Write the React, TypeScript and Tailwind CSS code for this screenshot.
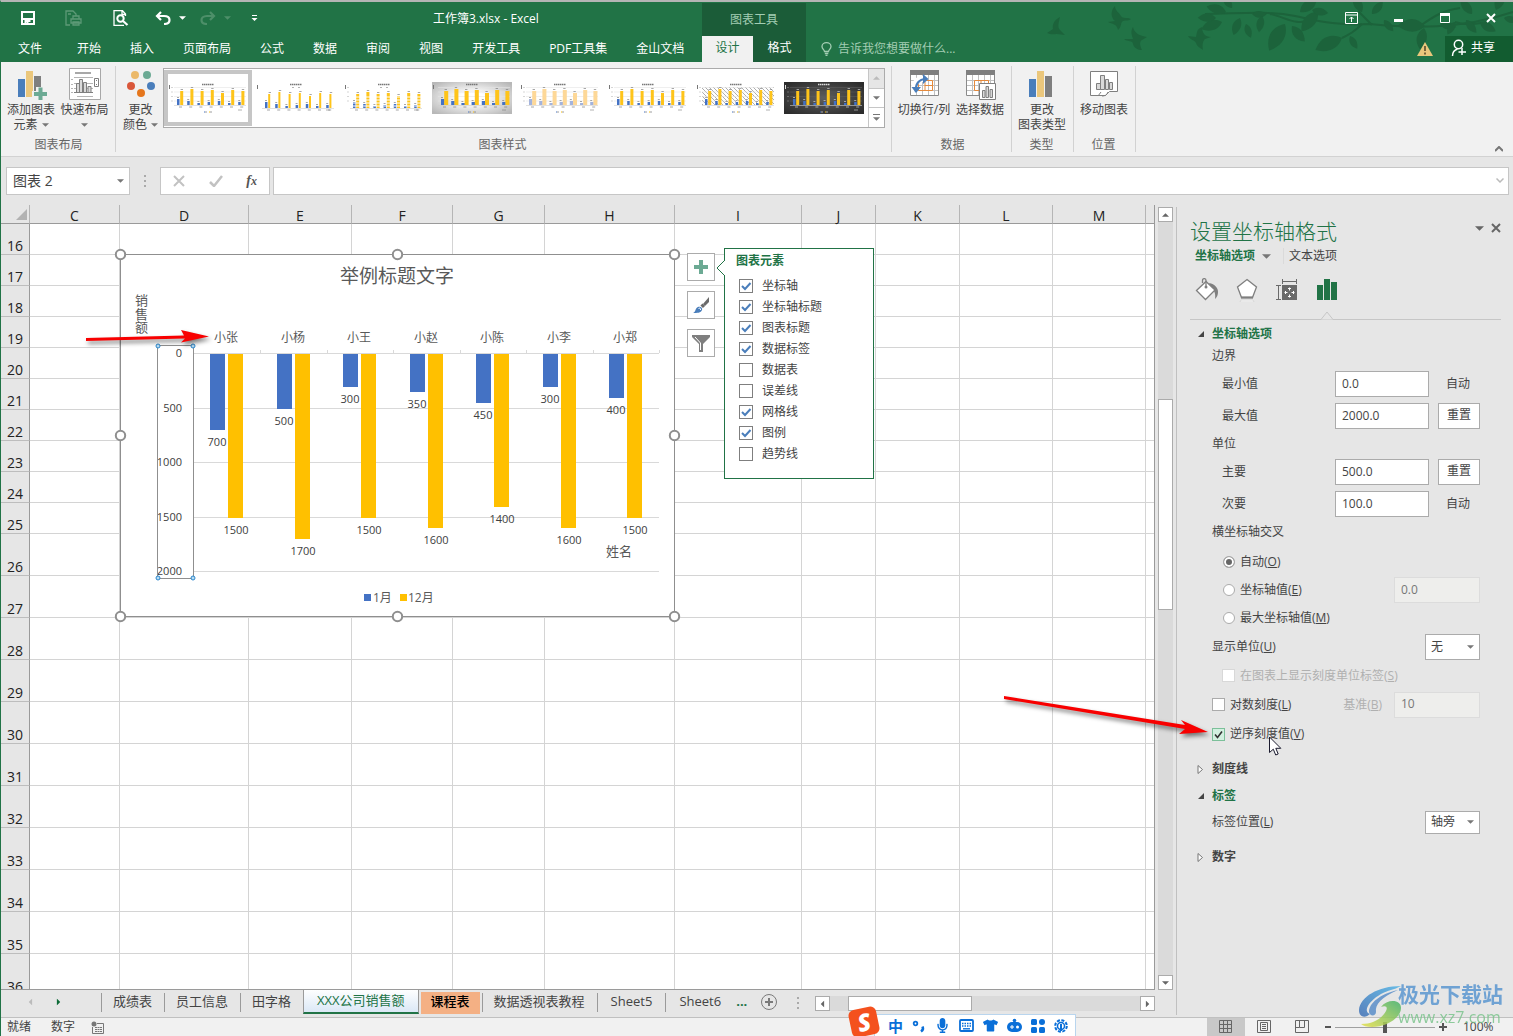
import { useState } from 'react';
import type { ReactNode } from 'react';
import clsx from 'clsx';
import { FaMicrophone, FaTshirt } from 'react-icons/fa';

const menuTabs = ['开始', '插入', '页面布局', '公式', '数据', '审阅', '视图', '开发工具', 'PDF工具集', '金山文档'];

const columns = [
  { name: 'C', width: 90 },
  { name: 'D', width: 129 },
  { name: 'E', width: 103 },
  { name: 'F', width: 101 },
  { name: 'G', width: 92 },
  { name: 'H', width: 130 },
  { name: 'I', width: 127 },
  { name: 'J', width: 74 },
  { name: 'K', width: 84 },
  { name: 'L', width: 93 },
  { name: 'M', width: 93 }
];

const rows = Array.from({ length: 21 }, (_, i) => i + 16);

const sales = [
  { name: '小张', jan: 700, dec: 1500 },
  { name: '小杨', jan: 500, dec: 1700 },
  { name: '小王', jan: 300, dec: 1500 },
  { name: '小赵', jan: 350, dec: 1600 },
  { name: '小陈', jan: 450, dec: 1400 },
  { name: '小李', jan: 300, dec: 1600 },
  { name: '小郑', jan: 400, dec: 1500 }
];

const chartElements = [
  { label: '坐标轴', on: true },
  { label: '坐标轴标题', on: true },
  { label: '图表标题', on: true },
  { label: '数据标签', on: true },
  { label: '数据表', on: false },
  { label: '误差线', on: false },
  { label: '网格线', on: true },
  { label: '图例', on: true },
  { label: '趋势线', on: false }
];

type ThumbStyle = 'plain' | 'thin' | 'striped' | 'silver' | 'pale' | 'narrow' | 'hatch' | 'dark';
const thumbStyles: ThumbStyle[] = ['plain', 'thin', 'striped', 'silver', 'pale', 'narrow', 'hatch', 'dark'];

function Caret({ className }: { className?: string }) {
  return (
    <svg viewBox="0 0 8 4" className={clsx('w-[7px] h-1 shrink-0', className)} aria-hidden="true">
      <path d="M0 0h8L4 4z" fill="currentColor" />
    </svg>
  );
}

/* ---------- Title bar ---------- */

const leaves = [
  [1226, 12, 205, 1.1], [1222, 22, 170, 1.2], [1240, 18, 120, 1], [1232, 8, 240, 0.8], [1246, 24, 80, 0.8], [1216, 18, 190, 1],
  [1252, 14, 10, 0.8], [1262, 16, 110, 0.9], [1285, 24, 130, 1.7], [1292, 26, 60, 1.1], [1300, 12, 330, 1.2], [1318, 12, 140, 1.4],
  [1312, 10, 20, 0.9], [1342, 38, 165, 1.6], [1350, 36, 70, 0.8], [1362, 12, 250, 1], [1372, 14, 320, 0.9], [1384, 20, 60, 0.8],
  [1425, 26, 190, 1.5], [1424, 28, 110, 1.2], [1440, 24, 20, 0.9], [1472, 14, 240, 1], [1480, 22, 40, 1],
  [1496, 10, 300, 1.1], [1504, 18, 20, 0.8], [1455, 22, 130, 0.8], [1466, 20, 60, 0.9]
];

function Foliage() {
  return (
    <svg viewBox="1040 2 473 60" className="absolute right-0 top-0 w-[473px] h-[60px]" fill="#1c633b" aria-hidden="true">
      <path d="M1060 17c-6 3-8 8-7 12l-6 4c4 2 8 1 10 1l8 1-5-5c-3-3-1-8 0-13z" />
      <path d="M1115 6c-5 5-4 12 0 15l-7 1c4 2 9 2 10 8 4-3 2-7 5-9 3-1 6 0 8-2-4-2-8 0-10-3-2-4-6-5-6-10z" />
      <path d="M1133 27c-3 5-1 8 0 12l-9 0c3 3 9 1 9 5 1 4 5 6 9 6-2-4-3-8 0-10l5-3c-7-1-13-4-14-10z" />
      <path d="M1202 27c-6 2-5 7-6 10l-8-1c2 4 7 4 8 7 1 4 5 5 7 7-1-6 0-9 2-11l6-2c-6 0-9-4-9-10z" />
      <g fill="none" stroke="#1c633b" strokeWidth="2">
        <path d="M1205 14c30 0 60-4 90 2 20 4 40 10 75 8 40 4 90 6 143-12" />
        <path d="M1270 14c16 3 24 12 42 6M1362 24c-8 8-12 10-20 14M1372 25l-14-14M1420 26c14-10 24-16 40-18M1455 22c12 4 20 2 32 0" />
      </g>
      {leaves.map(([x, y, angle, size]) => (
        <path
          key={`${x}-${y}`}
          d="M0 0c4-6 11-7 18-3C13 4 6 5 0 0z"
          transform={`translate(${x} ${y}) rotate(${angle}) scale(${size})`}
        />
      ))}
    </svg>
  );
}

function TitleBar() {
  return (
    <header className="relative flex h-[60px] shrink-0 bg-[#217346] text-white">
      <Foliage />
      <div className="relative flex w-[701px] shrink-0 flex-col">
        <div className="flex h-[34px] items-center">
          <div className="flex w-[432px] items-center pb-0.5">
            <button aria-label="保存" className="ml-5">
              <svg viewBox="0 0 14 14" className="size-3.5" fill="none" stroke="#fff" strokeWidth="2">
                <path d="M1 1h12v12H1z" />
                <path d="M1 8h12M4.500 13v-3h5" />
                <path d="M6.500 11v2" />
              </svg>
            </button>
            <button aria-label="快速打印" className="ml-[30px]">
              <svg viewBox="0 0 18 16" className="w-[18px] h-4" fill="none" stroke="#5d9a77" strokeWidth="1.300">
                <path d="M5 15H1V1h7l3 3v2M3 4h3" />
                <path d="M6 13V9h10v4zM8 9V6h6v3M8 12h6v3H8z" />
              </svg>
            </button>
            <button aria-label="打印预览" className="ml-[30px]">
              <svg viewBox="0 0 16 16" className="size-4" fill="none" stroke="#fff" strokeWidth="1.300">
                <path d="M11 15.300H1V.700h8.500L12.500 4v2M9 1v3.500h3.500" />
                <circle cx="7.500" cy="8.500" r="3.200" strokeWidth="2" />
                <path d="M10 11l4.500 4" strokeWidth="2.200" />
              </svg>
            </button>
            <button aria-label="撤消" className="ml-[26px] flex items-center gap-2">
              <svg viewBox="0 0 16 14" className="w-4 h-3.5" fill="none" stroke="#fff" strokeWidth="2.200">
                <path d="M6 1L2 5l4 4M2 5h7c4 0 5.500 2 5.500 4S13 13 9 13" />
              </svg>
              <Caret className="w-[5px]" />
            </button>
            <button aria-label="恢复" className="ml-3.5 flex items-center gap-2 text-[#4d8f69]">
              <svg viewBox="0 0 16 14" className="w-4 h-3.5" fill="none" stroke="currentColor" strokeWidth="2.200">
                <path d="M10 1l4 4-4 4M14 5H7C3 5 1.500 7 1.500 9S3 13 7 13" />
              </svg>
              <Caret className="w-[5px]" />
            </button>
            <button aria-label="自定义快速访问工具栏" className="ml-5">
              <svg viewBox="0 0 7 7" className="size-[7px]" fill="#fff">
                <path d="M1 0h5v1H1zM.500 3h6l-3 3z" />
              </svg>
            </button>
          </div>
          <h1 className="text-xs">工作簿3.xlsx - Excel</h1>
        </div>
        <nav className="flex h-[26px] items-center gap-[29px] pl-[17px] text-xs">
          <button className="mr-1.5">文件</button>
          {menuTabs.map((tab) => (
            <button key={tab} className="whitespace-nowrap">{tab}</button>
          ))}
        </nav>
      </div>
      <div className="relative mt-px flex w-[104px] shrink-0 flex-col bg-[#1b5c38] text-xs">
        <div className="flex h-[33px] items-center justify-center text-[#a3cdb3]">图表工具</div>
        <div className="flex flex-1">
          <button className="w-[51px] bg-[#f1f1f1] pb-0.5 text-[#217346]">设计</button>
          <button className="flex-1 pb-0.5">格式</button>
        </div>
      </div>
      <div className="relative flex flex-1 flex-col">
        <div className="flex h-[34px] items-center justify-end gap-9 pr-[17px] pb-0.5">
          <button aria-label="功能区显示选项">
            <svg viewBox="0 0 13 12" className="w-[13px] h-3" fill="none" stroke="#fff">
              <path d="M.500.500h12v11H.500zM.500 3h12M6.500 10V5M4.500 7l2-2 2 2" />
            </svg>
          </button>
          <button aria-label="最小化">
            <svg viewBox="0 0 10 10" className="size-2.5" fill="#fff"><path d="M0 6h9v3H0z" /></svg>
          </button>
          <button aria-label="最大化">
            <svg viewBox="0 0 10 10" className="size-2.5" fill="none" stroke="#fff">
              <path d="M.500.500h9v9h-9z" /><path d="M0 1.500h10" strokeWidth="3" />
            </svg>
          </button>
          <button aria-label="关闭">
            <svg viewBox="0 0 10 10" className="size-2.5" fill="none" stroke="#fff" strokeWidth="2"><path d="M1 1l8 8M9 1L1 9" /></svg>
          </button>
        </div>
        <div className="flex h-[26px] items-center">
          <button className="ml-[15px] flex items-center gap-1.5 text-xs text-[#a3cdb3]">
            <svg viewBox="0 0 11 14" className="w-[11px] h-3.5" fill="none" stroke="currentColor" strokeWidth="1.300">
              <path d="M3.500 9.500C3.500 8 1 7 1 4.500a4.500 3.800 0 0 1 9 0C10 7 7.500 8 7.500 9.500zM3.800 11.500h3.500M4.500 13.300h2" />
            </svg>
            告诉我您想要做什么...
          </button>
          <svg viewBox="0 0 16 14" className="ml-auto mr-3 w-4 h-3.5" aria-hidden="true">
            <path d="M8 0l8 14H0z" fill="#ebc77c" /><path d="M8 4v5M8 10.500v2" stroke="#5a4a2a" strokeWidth="1.600" />
          </svg>
          <button className="flex h-full w-[68px] items-center gap-1 bg-[#125c30] pb-0.5 pl-1.5 text-xs">
            <svg viewBox="0 0 16 18" className="w-4 h-[18px]" fill="none" stroke="#fff" strokeWidth="1.500">
              <circle cx="7.500" cy="5.500" r="4.200" /><path d="M1.500 17c0-4 2-6 5-7M11 9v7M7.500 13H15" />
            </svg>
            共享
          </button>
        </div>
      </div>
    </header>
  );
}

/* ---------- Ribbon ---------- */

function Thumb({ kind }: { kind: ThumbStyle }) {
  const decHeights = [14, 16, 14, 15, 12, 15, 14];
  const janHeights = [6, 4, 2, 3, 4, 2, 3];
  const wide = kind === 'silver' || kind === 'pale';
  const ink = kind === 'dark' ? '#ddd' : '#777';
  const low = kind === 'thin' || kind === 'striped';
  const base = low ? 26 : 23;
  const decW = wide ? 4 : kind === 'thin' ? 2 : 3;
  return (
    <svg viewBox="0 0 80 32" className="w-20 h-8" aria-hidden="true">
      <defs>
        <radialGradient id="silverBg" r=".65"><stop offset=".25" stopColor="#fff" /><stop offset="1" stopColor="#b8b8b8" /></radialGradient>
        <radialGradient id="darkBg" r=".65"><stop offset="0" stopColor="#5e5e5e" /><stop offset="1" stopColor="#2c2c2c" /></radialGradient>
        <pattern id="hatchBg" width="4" height="4" patternUnits="userSpaceOnUse"><path d="M0 0l4 4" stroke="#999" strokeWidth=".8" /></pattern>
      </defs>
      {kind === 'silver' && <rect width="80" height="32" fill="url(#silverBg)" />}
      {kind === 'dark' && <rect width="80" height="32" fill="url(#darkBg)" />}
      {kind === 'hatch' && <rect x="6" y="5" width="72" height="18" fill="url(#hatchBg)" />}
      <path d="M34 2.500h12" stroke={ink} strokeWidth="1.600" strokeDasharray="1.500 .5" />
      <path d="M1.500 3v4" stroke={ink} />
      {!low && <path d="M6 5.500h72M6 10h72M6 14.500h72M6 19h72" stroke={kind === 'dark' ? '#5c5c5c' : '#e4e4e4'} strokeWidth=".6" />}
      <path d={`M6 ${base}.5h72`} stroke="#ccc" strokeWidth=".6" />
      {kind !== 'thin' && kind !== 'silver' && <path d="M4 5v18" stroke={ink} strokeDasharray="1 3.500" opacity=".6" />}
      {decHeights.map((h, i) => {
        const x = 9 + i * 10.2;
        const blue = kind === 'pale' ? '#a3b3dc' : '#4472c4';
        const gold = kind === 'pale' ? '#fdd898' : '#fec41a';
        return (
          <g key={i}>
            <rect x={x} y={base - janHeights[i]} width={wide ? 3.5 : 2.5} height={janHeights[i]} fill={blue} />
            <rect x={x + 3.2} y={base - h} width={decW} height={h} fill={gold} />
            {kind === 'striped' && <path d={`M${x} ${base - 2}h7M${x} ${base - 5}h7M${x} ${base - 8}h7M${x} ${base - 11}h7`} stroke="#fff" />}
            <path d={`M${x + 3.6} ${base - h - 1.5}h2.4M${x} ${base - janHeights[i] - 1.5}h2M${x + 2} ${base + 2}h3`} stroke={ink} strokeWidth=".8" opacity=".8" />
          </g>
        );
      })}
      {low ? (
        <path d="M36 5.500h2M42 5.500h2" stroke={ink} strokeWidth=".8" opacity=".7" />
      ) : (
        <path d="M37 30h2M42 30h2" stroke={ink} opacity=".7" />
      )}
      {!low && <path d="M36 30h1" stroke="#4472c4" />}
      {!low && <path d="M41 30h1" stroke="#ffc000" />}
      <path d="M70 28h4" stroke={ink} strokeWidth=".8" opacity=".7" />
    </svg>
  );
}

function RibbonButton({ icon, lines, caret, className }: { icon: ReactNode; lines: string[]; caret?: boolean; className: string }) {
  return (
    <button className={clsx('flex flex-col items-center pt-0.5 text-xs leading-[15px] whitespace-nowrap text-[#444]', className)}>
      <svg viewBox="0 0 32 32" className="mb-0.5 size-8" fill="none" aria-hidden="true">{icon}</svg>
      <span>{lines[0]}</span>
      <span className="flex h-[15px] items-center gap-1">
        {lines[1]}
        {caret && <Caret className="w-[5px] text-[#777]" />}
      </span>
    </button>
  );
}

function RibbonGroup({ label, className, children }: { label: string; className: string; children: ReactNode }) {
  return (
    <section className={clsx('mt-1 flex h-[86px] shrink-0 flex-col border-r border-[#d2d2d2]', className)}>
      <div className="flex h-[73px]">{children}</div>
      <div className="pr-0.5 text-center text-xs leading-[15px] text-[#666]">{label}</div>
    </section>
  );
}

const barsIcon = (
  <>
    <path d="M3 11h7v18H3z" fill="#4a7ebb" />
    <path d="M11 3h7v26h-7z" fill="#ebc77c" />
    <path d="M19 8h7v21h-7z" fill="#7f7f7f" />
  </>
);

const tableIcon = (
  <>
    <path d="M2 3h29v25H2z" fill="#fff" />
    <path d="M2 12.500h29M2 17.500h29M2 22.500h29M8.500 7v21M14.500 7v21M20.500 7v21M26.500 7v21" stroke="#c0c0c0" />
    <path d="M2.500 2.500h28v25h-28z" stroke="#8a8a8a" />
    <path d="M2 2h29v5H2z" fill="#7f7f7f" />
    <path d="M10.500 12.500h14v10h-14zM17 12.500v10M17 17.500h8" stroke="#e58a3c" />
  </>
);

function Ribbon() {
  const [style, setStyle] = useState(0);
  return (
    <div className="relative flex h-[95px] shrink-0 border-b border-[#d2d2d2] bg-[#f1f1f1]">
      <RibbonGroup label="图表布局" className="w-[115px] pl-[3px]">
        <RibbonButton
          className="w-[54px]"
          caret
          lines={['添加图表', '元素']}
          icon={
            <>
              {barsIcon}
              <path d="M17 23h4v-4h8v4h4v8H17z" fill="#f1f1f1" />
              <path d="M19 24h4.500v-4.500h4V24H32v4h-4.500v4.500h-4V28H19z" fill="#6caa94" />
            </>
          }
        />
        <RibbonButton
          className="w-[53px]"
          caret
          lines={['快速布局']}
          icon={
            <>
              <path d="M.500.500h31v31H.500z" fill="#fff" stroke="#a8a8a8" />
              <path d="M6 5h16" stroke="#a8a8a8" strokeWidth="2" />
              <path d="M5 9.500h19M5 15.500h19M5 20.500h19M2 11.500h2M2 16.500h2M2 20.500h2M2 24.500h2M8 28.500h16" stroke="#b5b5b5" />
              <path d="M7.500 15.500h3v9h-3zM10.500 11.500h3v13h-3zM14.500 14.500h3v10h-3zM19 18.500h3v6h-3z" fill="#d9d9d9" stroke="#7f7f7f" />
              <path d="M5 24.500h19M25.500 10.500h4v8h-4zM27 12.500h1M27 16.500h1" stroke="#7f7f7f" />
            </>
          }
        />
      </RibbonGroup>
      <RibbonGroup label="图表样式" className="w-[776px]">
        <RibbonButton
          className="w-[47px] pl-0.5"
          caret
          lines={['更改', '颜色']}
          icon={
            <>
              <circle cx="10" cy="7" r="4" fill="#ebb96a" />
              <circle cx="22" cy="7" r="4" fill="#6caa94" />
              <circle cx="6" cy="18" r="4" fill="#d9573a" />
              <circle cx="26" cy="18" r="4" fill="#4a7ebb" />
              <circle cx="16" cy="25" r="4" fill="#e5761c" />
            </>
          }
        />
        <div className="mt-0.5 flex h-[60px] border border-[#ababab] bg-white">
          {thumbStyles.map((kind, i) => (
            <button
              key={kind}
              aria-label={`样式 ${i + 1}`}
              onClick={() => setStyle(i)}
              className={clsx(
                'mt-px flex h-14 w-22 items-center justify-center border-4',
                style === i ? 'border-[#c6c6c6]' : 'border-transparent'
              )}
            >
              <Thumb kind={kind} />
            </button>
          ))}
          <div className="flex w-4 flex-col border-l border-[#c6c6c6] text-[#777]">
            <button aria-label="向上" className="flex flex-1 items-center justify-center bg-[#e6e6e6] text-[#bbb]"><Caret className="w-[5px] rotate-180" /></button>
            <button aria-label="向下" className="flex flex-1 items-center justify-center border-y border-[#c6c6c6]"><Caret className="w-[5px]" /></button>
            <button aria-label="其他" className="flex flex-1 flex-col items-center justify-center gap-0.5">
              <span className="h-px w-[7px] bg-[#777]" />
              <Caret className="w-[5px]" />
            </button>
          </div>
        </div>
      </RibbonGroup>
      <RibbonGroup label="数据" className="w-[120px] pl-1">
        <RibbonButton
          className="w-14"
          lines={['切换行/列']}
          icon={
            <>
              {tableIcon}
              <path d="M6 23c-1-8 4-13 12-12" stroke="#fff" strokeWidth="6" />
              <path d="M8 24c-1-8 3-13 10-13" stroke="#4a7ebb" strokeWidth="2.200" />
              <path d="M15 6l5.500 5-5.500 5zM3.500 19l4.500 6 5-6z" fill="#4a7ebb" />
            </>
          }
        />
        <RibbonButton
          className="w-14"
          lines={['选择数据']}
          icon={
            <>
              {tableIcon}
              <path d="M15.500 15.500h16v16h-16z" fill="#fff" stroke="#7f7f7f" />
              <path d="M18.500 22.500h2.500v7h-2.500zM22 18.500h2.500v11H22zM26 21.500h2.500v8H26z" fill="#d9d9d9" stroke="#7f7f7f" />
            </>
          }
        />
      </RibbonGroup>
      <RibbonGroup label="类型" className="w-[62px]">
        <RibbonButton className="w-[60px]" lines={['更改', '图表类型']} icon={barsIcon} />
      </RibbonGroup>
      <RibbonGroup label="位置" className="w-[62px]">
        <RibbonButton
          className="w-[60px]"
          lines={['移动图表']}
          icon={
            <>
              <path d="M2.500 3.500h27v20h-8l-4 4h-15z" fill="#fff" stroke="#7f7f7f" />
              <path d="M8.500 15.500h4v6h-4zM12.500 7.500h4v14h-4zM17.500 11.500h3v10h-3zM21.500 14.500h3v7h-3z" fill="#d9d9d9" stroke="#7f7f7f" />
              <path d="M10 28l3-4M14 28c3 0 5-1 6-4" stroke="#7f7f7f" />
            </>
          }
        />
      </RibbonGroup>
      <button aria-label="折叠功能区" className="mt-auto mr-2.5 mb-1 ml-auto">
        <svg viewBox="0 0 8 6" className="w-2 h-1.5" fill="none" stroke="#777" strokeWidth="2"><path d="M0 5l4-4 4 4" /></svg>
      </button>
    </div>
  );
}

function FormulaBar() {
  return (
    <div className="flex h-12 shrink-0 items-center pb-px pl-[5px] pr-1 text-[#444]">
      <div className="flex h-7 w-[124px] items-center border border-[#c6c6c6] bg-white pr-[5px]">
        <input aria-label="名称框" defaultValue="图表 2" className="w-0 flex-1 pl-1.5 text-sm outline-none" />
        <Caret className="text-[#777]" />
      </div>
      <svg viewBox="0 0 2 12" className="mx-3.5 w-0.5 h-3" fill="#aaa"><path d="M0 0h2v2H0zM0 5h2v2H0zM0 10h2v2H0z" /></svg>
      <div className="flex h-7 w-[110px] items-center justify-between border border-[#c6c6c6] bg-white pr-3 pl-3">
        <button aria-label="取消">
          <svg viewBox="0 0 12 12" className="size-3" fill="none" stroke="#c2c2c2" strokeWidth="2"><path d="M1 1l10 10M11 1L1 11" /></svg>
        </button>
        <button aria-label="输入">
          <svg viewBox="0 0 14 12" className="w-3.5 h-3" fill="none" stroke="#c2c2c2" strokeWidth="2.500"><path d="M1 7l4 4 8-10" /></svg>
        </button>
        <button aria-label="插入函数" className="font-['Liberation_Serif',serif] text-sm leading-4 font-bold text-[#555] italic">
          f<span className="text-xs">x</span>
        </button>
      </div>
      <div className="ml-[3px] flex h-7 flex-1 items-center border border-[#c6c6c6] bg-white pr-1">
        <input aria-label="编辑栏" className="flex-1 px-1 text-sm outline-none" />
        <svg viewBox="0 0 8 5" className="w-2 h-[5px]" fill="none" stroke="#bbb" strokeWidth="1.500"><path d="M.500.500l3.500 3.500L7.500.500" /></svg>
      </div>
    </div>
  );
}

/* ---------- Worksheet ---------- */

const PLOT = { left: 73, top: 99, width: 466, height: 218, max: 2000 };

function SalesChart() {
  const step = PLOT.width / sales.length;
  const scale = (value: number) => Math.round((value / PLOT.max) * PLOT.height);
  const handles = [[0, 0], [277, 0], [554, 0], [0, 181], [554, 181], [0, 362], [277, 362], [554, 362]];
  return (
    <svg viewBox="0 0 555 363" className="absolute top-[49px] left-[119px] h-[363px] w-[555px] overflow-visible text-[11px]" fill="#404040">
      <rect x=".5" y=".5" width="554" height="362" fill="#fff" stroke="#8f8f8f" />
      <text x="277" y="29" textAnchor="middle" fill="#595959" className="text-[19px]">举例标题文字</text>
      <g fill="#595959">
        <text x="15" y="51" className="text-[13px]">销</text>
        <text x="15" y="65" className="text-[13px]">售</text>
        <text x="15" y="78" className="text-[13px]">额</text>
        <text x="486" y="302" className="text-[13px]">姓名</text>
      </g>
      {[0, 500, 1000, 1500, 2000].map((tick) => (
        <g key={tick}>
          <path d={`M${PLOT.left} ${PLOT.top + scale(tick) + 0.5}h${PLOT.width}`} stroke="#d9d9d9" />
          <text x="62" y={PLOT.top + scale(tick) + 4} textAnchor="end">{tick}</text>
        </g>
      ))}
      {sales.map((item, i) => {
        const x = Math.round(PLOT.left + i * step);
        return (
          <g key={item.name}>
            <path d={`M${Math.round(x + step)}.5 96v3`} stroke="#d9d9d9" />
            <rect x={x + 17} y={PLOT.top + 1} width="15" height={scale(item.jan)} fill="#4472c4" />
            <rect x={x + 35} y={PLOT.top + 1} width="15" height={scale(item.dec)} fill="#ffc000" />
            <text x={x + 33} y="88" textAnchor="middle" fill="#595959" className="text-xs">{item.name}</text>
            <text x={x + 24} y={PLOT.top + scale(item.jan) + 17} textAnchor="middle">{item.jan}</text>
            <text x={x + 43} y={PLOT.top + scale(item.dec) + 17} textAnchor="middle">{item.dec}</text>
          </g>
        );
      })}
      <rect x="37.5" y="91.5" width="36" height="233" fill="none" stroke="#8f8f8f" />
      {[[38, 92], [73, 92], [38, 324], [73, 324]].map(([x, y]) => (
        <circle key={`${x}-${y}`} cx={x} cy={y} r="2" fill="#b9dcf2" stroke="#2a86cc" />
      ))}
      <path d="M244 340h7v7h-7z" fill="#4472c4" />
      <path d="M280 340h7v7h-7z" fill="#ffc000" />
      <g fill="#595959">
        <text x="253" y="348" className="text-xs">1月</text>
        <text x="288" y="348" className="text-xs">12月</text>
      </g>
      {handles.map(([x, y]) => (
        <circle key={`${x}-${y}`} cx={x + 0.5} cy={y + 0.5} r="4.700" fill="#fff" stroke="#8f8f8f" strokeWidth="2" />
      ))}
    </svg>
  );
}

function ChartSideButtons() {
  const box = 'flex size-7 items-center justify-center border border-[#ababab] bg-white';
  return (
    <div className="absolute top-12 left-[686px] flex flex-col gap-2.5">
      <button aria-label="图表元素" className={box}>
        <svg viewBox="0 0 14 14" className="size-3.5" fill="#6caa94"><path d="M5 0h4v5h5v4H9v5H5V9H0V5h5z" /></svg>
      </button>
      <button aria-label="图表样式" className={box}>
        <svg viewBox="0 0 18 18" className="size-[18px]">
          <path d="M17 1v5l-4 4-2-2z" fill="#6a6a6a" />
          <path d="M9.500 8.500l2.500 2.500" stroke="#6a6a6a" strokeWidth="3" />
          <path d="M1 17c3-1 2-5 5-6 2-1 5 1 4 3-1 3-5 3-9 3z" fill="#4a7ebb" />
          <path d="M6.500 12.500c1-1 2.500 0 2 1.500" stroke="#fff" fill="none" />
        </svg>
      </button>
      <button aria-label="图表筛选器" className={box}>
        <svg viewBox="0 0 18 17" className="w-[18px] h-[17px]" fill="#7f7f7f">
          <path d="M0 0h18v2l-7 7v8H7V9L0 2z" /><path d="M3 2l5.500 6v7" stroke="#fff" fill="none" />
        </svg>
      </button>
    </div>
  );
}

function ElementsPopup() {
  return (
    <div className="absolute top-[43px] left-[723px] h-[231px] w-[150px] border border-[#217346] bg-white pl-[11px]">
      <svg viewBox="0 0 9 18" className="absolute top-2.5 -left-[9px] w-[9px] h-[18px]">
        <path d="M9 0v1L1 9l8 8" fill="#fff" stroke="#217346" />
      </svg>
      <h2 className="mt-[3px] mb-[5px] text-xs leading-[18px] font-bold text-[#217346]">图表元素</h2>
      {chartElements.map((item) => (
        <label key={item.label} className="flex h-[21px] items-center text-xs text-[#444]">
          <span className="relative ml-[3px] mr-[9px] size-3.5">
            <input type="checkbox" defaultChecked={item.on} className="peer block size-3.5 appearance-none border border-[#7f7f7f] bg-white" />
            <svg viewBox="0 0 14 14" className="pointer-events-none invisible absolute inset-0 peer-checked:visible" fill="none" stroke="#4a7ebb" strokeWidth="2">
              <path d="M3 7l3 3 5.500-6" />
            </svg>
          </span>
          {item.label}
        </label>
      ))}
    </div>
  );
}

function Worksheet() {
  return (
    <div className="relative flex-1 overflow-hidden border-r border-b border-[#9a9a9a]">
      <table className="w-full table-fixed border-separate border-spacing-0 text-sm leading-4 text-[#222]">
        <colgroup>
          <col className="w-[29px]" />
          {columns.map((col) => (
            <col key={col.name} style={{ width: col.width }} />
          ))}
          <col />
        </colgroup>
        <thead>
          <tr className="h-[19px] bg-[#e6e6e6]">
            <td className="border-r border-b border-[#b5b5b5] border-b-[#9a9a9a]">
              <svg viewBox="0 0 11 11" className="ml-auto mr-0.5 size-[11px]" fill="#b2b2b2"><path d="M11 0v11H0z" /></svg>
            </td>
            {columns.map((col) => (
              <th key={col.name} scope="col" className="border-r border-b border-[#b5b5b5] border-b-[#9a9a9a] pt-[3px] align-bottom leading-[15px] font-normal">
                {col.name}
              </th>
            ))}
            <td className="border-b border-[#9a9a9a]" />
          </tr>
        </thead>
        <tbody>
          {rows.map((row) => (
            <tr key={row} className={row < 26 ? 'h-[31px]' : 'h-[42px]'}>
              <th scope="row" className="border-r border-b border-[#9a9a9a] border-b-[#bdbdbd] bg-[#e6e6e6] text-center align-bottom font-normal">
                {row}
              </th>
              {columns.map((col) => (
                <td key={col.name} className="border-r border-b border-[#d4d4d4] bg-white" />
              ))}
              <td className="border-b border-[#d4d4d4] bg-white" />
            </tr>
          ))}
        </tbody>
      </table>
      <SalesChart />
      <ChartSideButtons />
      <ElementsPopup />
      <svg viewBox="0 0 126 16" className="absolute top-[125px] left-[85px] h-4 w-[126px] overflow-visible drop-shadow-[2px_3px_2px_rgba(0,0,0,0.5)]" fill="#f80000">
        <path d="M0 8L98 5.500l-3-5.500 28 6.500L95 12.500l4-4L0 11z" />
      </svg>
    </div>
  );
}

function ScrollButton({ label, turn, className }: { label: string; turn: string; className?: string }) {
  return (
    <button aria-label={label} className={clsx('flex size-[15px] shrink-0 items-center justify-center border border-[#ababab] bg-white text-[#666]', className)}>
      <Caret className={turn} />
    </button>
  );
}

function SheetTabs() {
  const tab = 'my-[3px] flex h-[19px] items-center border-l border-[#9a9a9a] pb-0.5 whitespace-nowrap';
  return (
    <div className="flex h-[27px] shrink-0 text-[13px] text-[#444]">
      <div className="flex w-[100px] items-center pb-1">
        <Caret className="ml-[26px] rotate-90 text-[#bbb]" />
        <Caret className="ml-[21px] -rotate-90 text-[#0d6b37]" />
      </div>
      <button className={clsx(tab, 'pr-3 pl-[11px]')}>成绩表</button>
      <button className={clsx(tab, 'pr-3 pl-[11px]')}>员工信息</button>
      <button className={clsx(tab, 'pr-3 pl-[11px]')}>田字格</button>
      <button className="-mt-px h-[25px] border-x border-b-2 border-x-[#9a9a9a] border-b-[#217346] bg-linear-to-b from-white to-[#dbe8f6] px-[13px] whitespace-nowrap text-[#217346]">
        XXX公司销售额
      </button>
      <button className="mx-0.5 mt-0.5 h-[22px] bg-[#f4b084] px-2.5 pb-0.5 font-medium whitespace-nowrap text-black">课程表</button>
      <button className={clsx(tab, 'pr-3 pl-[11px]')}>数据透视表教程</button>
      <button className={clsx(tab, 'px-[13px]')}>Sheet5</button>
      <button className={clsx(tab, 'px-[13px]')}>Sheet6</button>
      <button aria-label="更多工作表" className="mb-1 ml-0.5 font-bold text-[#217346]">...</button>
      <button aria-label="新工作表" className="mb-1 ml-3.5">
        <svg viewBox="0 0 16 16" className="size-4" fill="none" stroke="#7a7a7a"><circle cx="8" cy="8" r="7.500" /><path d="M4 8h8M8 4v8" strokeWidth="2" /></svg>
      </button>
      <svg viewBox="0 0 2 12" className="mt-[7px] ml-5 w-0.5 h-3" fill="#aaa"><path d="M0 0h2v2H0zM0 5h2v2H0zM0 10h2v2H0z" /></svg>
      <div className="mt-1.5 mr-[21px] ml-4 flex h-[15px] flex-1 bg-[#dadada]">
        <ScrollButton label="向左滚动" turn="rotate-90" />
        <div className="ml-[18px] w-[124px] border border-[#ababab] bg-white" />
        <ScrollButton label="向右滚动" turn="-rotate-90" className="ml-auto" />
      </div>
    </div>
  );
}

/* ---------- Format pane ---------- */

function SectionTitle({ open, className, children }: { open?: boolean; className: string; children: ReactNode }) {
  return (
    <button className={clsx('flex w-full items-center pl-5 font-bold', open ? 'text-[#217346]' : 'text-[#444]', className)}>
      <svg viewBox="0 0 7 9" className="mr-2 w-[7px] h-[9px]">
        {open ? <path d="M7 1v6H1z" fill="#444" /> : <path d="M1 .500v8l4.500-4z" fill="#fff" stroke="#777" />}
      </svg>
      {children}
    </button>
  );
}

function ValueRow({ id, label, value, auto }: { id: string; label: string; value: string; auto?: boolean }) {
  return (
    <div className="flex h-8 items-center pl-[45px]">
      <label htmlFor={id} className="flex-1">{label}</label>
      <input id={id} defaultValue={value} className="h-[26px] w-[94px] border border-[#ababab] bg-white px-1.5 pb-0.5 outline-none" />
      {auto ? (
        <span className="mr-[33px] ml-2.5 w-[41px] pl-[7px]">自动</span>
      ) : (
        <button className="mr-[33px] ml-[9px] h-[26px] w-[42px] border border-[#ababab] bg-white pb-0.5">重置</button>
      )}
    </div>
  );
}

function PaneCheckbox({ id, on, disabled }: { id: string; on?: boolean; disabled?: boolean }) {
  return (
    <span className="relative mr-[5px] size-[13px] shrink-0">
      <input
        id={id}
        type="checkbox"
        defaultChecked={on}
        disabled={disabled}
        className="peer block size-[13px] appearance-none border border-[#ababab] bg-white checked:border-[#7cc09a] checked:bg-[#d3f0e0] disabled:border-[#d8d8d8]"
      />
      <svg viewBox="0 0 13 13" className="pointer-events-none invisible absolute inset-0 peer-checked:visible" fill="none" stroke="#333" strokeWidth="1.600">
        <path d="M3 6.500l2.500 3L10 3.500" />
      </svg>
    </span>
  );
}

function PaneSelect({ id, value, className }: { id: string; value: string; className: string }) {
  return (
    <div className={clsx('relative mr-[33px] w-[55px]', className)}>
      <select id={id} className="h-full w-full appearance-none border border-[#ababab] bg-white pl-[5px] text-[#444]">
        <option>{value}</option>
      </select>
      <Caret className="pointer-events-none absolute top-1/2 right-1.5 -mt-0.5 text-[#777]" />
    </div>
  );
}

function AxisRadio({ text, hotkey, on }: { text: string; hotkey: string; on?: boolean }) {
  return (
    <label className="flex h-7 items-center gap-[5px]">
      <input
        type="radio"
        name="cross"
        defaultChecked={on}
        className="size-3 appearance-none rounded-full border border-[#ababab] bg-white checked:bg-[#666] checked:shadow-[inset_0_0_0_2px_#fff]"
      />
      <span>{text}(<u>{hotkey}</u>)</span>
    </label>
  );
}

function FormatPane() {
  const dim = 'mr-[33px] h-[26px] w-[86px] border border-[#dcdcdc] bg-[#eeeeec] px-1.5 pb-0.5 text-[#777]';
  return (
    <aside className="relative mt-0.5 mb-0.5 w-[337px] shrink-0 border-l border-[#c0c0c0] text-xs text-[#444]">
      <div className="flex h-[39px] items-start justify-between pt-[9px] pr-3 pl-[13px]">
        <h2 className="text-[21px] leading-[30px] font-light text-[#217346]">设置坐标轴格式</h2>
        <div className="flex items-center gap-[7px] pt-[7px] text-[#666]">
          <button aria-label="任务窗格选项"><Caret className="w-[9px] h-[5px]" /></button>
          <button aria-label="关闭窗格">
            <svg viewBox="0 0 10 10" className="size-2.5" fill="none" stroke="currentColor" strokeWidth="2"><path d="M1 1l8 8M9 1L1 9" /></svg>
          </button>
        </div>
      </div>
      <div className="flex h-5 items-center pl-[18px]">
        <button className="flex items-center gap-[7px] font-bold text-[#217346]">
          坐标轴选项
          <Caret className="w-[9px] h-[5px] text-[#777]" />
        </button>
        <button className="ml-3 border-l border-[#dadada] pl-[5px]">文本选项</button>
      </div>
      <div className="flex h-12 items-center gap-4 pl-[18px]">
        <button aria-label="填充与线条">
          <svg viewBox="0 0 24 24" className="size-6" fill="none" stroke="#7f7f7f">
            <path d="M14 5c6 1 9 5 9 9 0 3-1 5-3 7 1-6-1-9-4-11z" fill="#7f7f7f" stroke="none" />
            <path d="M1.500 12.500l9.500-9 9 8.500-9.500 9.500z" fill="#fff" strokeWidth="1.300" />
            <path d="M7.500 5V2.500C7.500 0 11 0 11 2.500V9" strokeWidth="1.300" /><circle cx="11" cy="9" r="1.500" fill="#7f7f7f" stroke="none" />
          </svg>
        </button>
        <button aria-label="效果">
          <svg viewBox="0 0 24 24" className="size-6" fill="none" stroke="#7f7f7f">
            <path d="M12 1.500L21.500 9l-4 10.500h-11L2.500 9z" fill="#fff" strokeWidth="1.300" />
            <path d="M6 19.500h12" strokeWidth="2" /><path d="M6 22l-1 2h14l-1-2z" fill="#f7f7f7" stroke="#ccc" strokeWidth=".6" />
          </svg>
        </button>
        <button aria-label="大小与属性">
          <svg viewBox="0 0 24 24" className="size-6" fill="none" stroke="#6a6a6a">
            <path d="M7.500 1v5M21.500 1v5M7.500 3.500h14M1 7.500h5M1 21.500h5M3.500 7.500v14" />
            <path d="M7 7h15v15H7z" fill="#6a6a6a" stroke="none" />
            <path d="M14.500 9.500v3M14.500 16.500v3M9.500 14.500h3M16.500 14.500h3M13 10.500h3M13 18.500h3M10.500 13v3M18.500 13v3" stroke="#fff" />
          </svg>
        </button>
        <button aria-label="坐标轴选项">
          <svg viewBox="0 0 24 24" className="size-6" fill="#217346"><path d="M2 7h6v15H2zM9 1h6v21H9zM16 4h6v18h-6z" /></svg>
        </button>
      </div>
      <div className="relative mr-3 ml-[13px] h-[6px] border-b border-[#c6c6c6]">
        <svg viewBox="0 0 14 9" className="absolute -bottom-px left-[130px] w-3.5 h-[9px]"><path d="M0 8.500h1L7 1l6 7.500h1" fill="#e6e6e6" stroke="#c6c6c6" /></svg>
      </div>

      <SectionTitle open className="mt-1 h-5">坐标轴选项</SectionTitle>
      <h3 className="h-6 pl-[35px] leading-6">边界</h3>
      <ValueRow id="axis-min" label="最小值" value="0.0" auto />
      <ValueRow id="axis-max" label="最大值" value="2000.0" />
      <h3 className="h-6 pl-[35px] leading-6">单位</h3>
      <ValueRow id="unit-major" label="主要" value="500.0" />
      <ValueRow id="unit-minor" label="次要" value="100.0" auto />
      <fieldset>
        <legend className="mb-1 h-6 pl-[35px] leading-6">横坐标轴交叉</legend>
        <div className="pl-[46px]">
          <AxisRadio text="自动" hotkey="O" on />
          <div className="flex items-center justify-between">
            <AxisRadio text="坐标轴值" hotkey="E" />
            <input aria-label="坐标轴值" disabled defaultValue="0.0" className={dim} />
          </div>
          <AxisRadio text="最大坐标轴值" hotkey="M" />
        </div>
      </fieldset>
      <div className="flex h-[29px] items-center justify-between pl-[35px]">
        <label htmlFor="display-unit">显示单位(<u>U</u>)</label>
        <PaneSelect id="display-unit" value="无" className="h-[26px]" />
      </div>
      <div className="flex h-[29px] items-center pl-[45px] text-[#b0b0b0]">
        <PaneCheckbox id="unit-label" disabled />
        <label htmlFor="unit-label">在图表上显示刻度单位标签(<u>S</u>)</label>
      </div>
      <div className="flex h-[29px] items-center pl-[35px]">
        <PaneCheckbox id="log-scale" />
        <label htmlFor="log-scale">对数刻度(<u>L</u>)</label>
        <label htmlFor="log-base" className="mr-3 ml-auto text-[#b0b0b0]">基准(<u>B</u>)</label>
        <input id="log-base" disabled defaultValue="10" className={dim} />
      </div>
      <div className="relative flex h-[30px] items-center pl-[35px]">
        <PaneCheckbox id="reverse" on />
        <label htmlFor="reverse">逆序刻度值(<u>V</u>)</label>
        <svg viewBox="0 0 206 40" className="pointer-events-none absolute -top-[23px] -left-[174px] h-10 w-[206px] overflow-visible drop-shadow-[2px_3px_2px_rgba(0,0,0,0.5)]" fill="#f80000">
          <path d="M1 0l181 29-4-5 27 12-29 2 6-5L1 3z" />
        </svg>
        <svg viewBox="0 0 13 20" className="pointer-events-none absolute top-[17px] left-[92px] h-5 w-[13px]">
          <path d="M.500 1v15.500l3.800-3.300 2.400 5.800 2.500-1-2.400-5.700h5z" fill="#fff" stroke="#1a1a2e" />
        </svg>
      </div>
      <SectionTitle className="mt-1.5 h-7">刻度线</SectionTitle>
      <SectionTitle open className="h-[26px]">标签</SectionTitle>
      <div className="flex h-[26px] items-center justify-between pl-[35px]">
        <label htmlFor="label-pos">标签位置(<u>L</u>)</label>
        <PaneSelect id="label-pos" value="轴旁" className="h-[23px]" />
      </div>
      <SectionTitle className="mt-2 h-7">数字</SectionTitle>
    </aside>
  );
}

/* ---------- Status bar and overlays ---------- */

function StatusBar() {
  return (
    <footer className="flex h-[19px] shrink-0 items-center border-t border-[#c0c0c0] bg-[#f1f1f1] text-xs text-[#444]">
      <span className="ml-1.5">就绪</span>
      <span className="ml-5">数字</span>
      <svg viewBox="0 0 13 13" className="ml-4 size-[13px]" fill="none" stroke="#777">
        <path d="M6 2.500h6.500v10h-11V6" /><path d="M4 6.500h7M4 8.500h7M4 10.500h7" strokeDasharray="2 .5" /><circle cx="3" cy="3" r="2.500" fill="#777" stroke="none" />
      </svg>
      <button aria-label="普通" className="ml-auto flex h-full w-[38px] items-center justify-center bg-[#c8c8c8]">
        <svg viewBox="0 0 14 14" className="size-3.5" fill="none" stroke="#666"><path d="M.500.500h12v12H.500zM.500 4.500h12M.500 8.500h12M4.500.500v12M8.500.500v12" /></svg>
      </button>
      <button aria-label="页面布局" className="flex w-[38px] justify-center">
        <svg viewBox="0 0 14 14" className="size-3.5" fill="none" stroke="#666"><path d="M.500.500h13v12H.500zM3.500 2.500h7v8h-7zM5 4.500h4M5 6.500h4M5 8.500h4" /></svg>
      </button>
      <button aria-label="分页预览" className="flex w-[38px] justify-center">
        <svg viewBox="0 0 14 14" className="size-3.5" fill="none" stroke="#666"><path d="M.500.500h13v12H.500zM4.500.500v7h5v-7M.500 7.500h4" /></svg>
      </button>
      <button aria-label="缩小" className="ml-1 h-0.5 w-1.5 bg-[#555]" />
      <div className="relative ml-1 h-px w-[100px] bg-[#a0a0a0]">
        <span className="absolute -top-[5px] left-12 h-[11px] w-1 bg-[#555]" />
      </div>
      <button aria-label="放大" className="ml-1">
        <svg viewBox="0 0 8 8" className="size-2" stroke="#555" strokeWidth="2"><path d="M0 4h8M4 0v8" /></svg>
      </button>
      <span className="mr-[18px] ml-4 w-8">100%</span>
    </footer>
  );
}

function InputMethodBar() {
  return (
    <div className="absolute bottom-0 left-[849px] flex h-[25px] items-end">
      <div className="relative z-10 flex size-7 -rotate-12 items-center justify-center rounded-md bg-[#f4511e] text-2xl leading-6 font-black text-white italic">S</div>
      <div className="-ml-1 flex h-[22px] w-[202px] items-center gap-[9px] border border-b-0 border-[#b9d5ee] bg-white pl-[13px] text-[15px] leading-4 font-bold text-[#0a6fd8]">
        <span>中</span>
        <svg viewBox="0 0 14 14" className="size-3.5" fill="none" stroke="currentColor" strokeWidth="1.800">
          <circle cx="3.500" cy="4.500" r="1.800" /><path d="M10.500 7.500c1 2 0 4-1.500 5" strokeWidth="2.500" />
        </svg>
        <FaMicrophone className="size-[15px]" />
        <svg viewBox="0 0 15 13" className="w-[15px] h-[13px]" fill="none" stroke="currentColor">
          <rect x="1" y="1" width="13" height="11" rx="1" strokeWidth="1.800" /><path d="M3 4.500h9M3 7h9" strokeWidth="1.400" strokeDasharray="1.500 1" /><path d="M4 9.800h7" strokeWidth="1.400" />
        </svg>
        <FaTshirt className="size-[15px]" />
        <svg viewBox="0 0 15 15" className="size-[15px]" fill="currentColor">
          <rect y="4" width="15" height="10" rx="5" /><circle cx="7.500" cy="2.500" r="1.800" />
          <path d="M3 9h4M5 7v4" stroke="#fff" /><circle cx="10.500" cy="9" r="1.500" fill="#fff" />
        </svg>
        <svg viewBox="0 0 14 14" className="size-3.5" fill="currentColor">
          <rect y="0" width="6" height="6" rx="1.500" /><circle cx="11" cy="3" r="3" /><rect y="8" width="6" height="6" rx="1.500" /><rect x="8" y="8" width="6" height="6" rx="1.500" />
        </svg>
        <svg viewBox="0 0 14 14" className="size-3.5" fill="none" stroke="currentColor" strokeWidth="2">
          <circle cx="7" cy="7" r="5.800" strokeDasharray="3 1.500" /><circle cx="7" cy="7" r="3.500" strokeWidth="1.500" /><path d="M7 5v7" />
        </svg>
      </div>
    </div>
  );
}

function SiteMark() {
  return (
    <div className="pointer-events-none absolute right-2.5 bottom-[7px] flex items-center opacity-85">
      <svg viewBox="0 0 44 42" className="h-[42px] w-11">
        <defs>
          <linearGradient id="markBlue" x1="0" y1="1" x2="1" y2="0"><stop offset="0" stopColor="#3f6fb5" /><stop offset="1" stopColor="#52b4e6" /></linearGradient>
          <linearGradient id="markGreen" x1="0" y1="1" x2="1" y2="0"><stop offset="0" stopColor="#e8e04a" /><stop offset="1" stopColor="#45b26b" /></linearGradient>
        </defs>
        <path d="M43 1C20 1 2 12 1 25c0 8 7 8 11 4-6-2-4-11 11-20C30 5 36 5 43 1z" fill="url(#markBlue)" />
        <path d="M11 27c0-9 11-18 29-22-17 7-23 15-22 22 0 4-6 5-7 0z" fill="#5b8fc9" />
        <path d="M3 39c13 0 21-6 25-13 2-4 0-6-5-4 6-8 20-8 20 1 0 10-15 19-29 19-5 0-9-1-11-3z" fill="url(#markGreen)" />
      </svg>
      <div className="-ml-1 whitespace-nowrap">
        <div className="text-[21px] leading-[22px] font-bold text-[#5b97d0]">极光下载站</div>
        <div className="text-base leading-6 font-medium text-[#7cc48d]">www.xz7.com</div>
      </div>
    </div>
  );
}

export default function App() {
  return (
    <div className="relative flex h-screen flex-col overflow-hidden border-t-2 border-l border-t-[#b5b5b5] border-l-[#217346] bg-[#e6e6e6] font-['Open_Sans','Noto_Sans_CJK_SC',sans-serif]">
      <TitleBar />
      <Ribbon />
      <FormulaBar />
      <main className="flex min-h-0 flex-1">
        <div className="flex min-w-0 flex-1 flex-col">
          <div className="flex min-h-0 flex-1">
            <Worksheet />
            <div className="mx-[3px] mt-0.5 flex w-[15px] flex-col bg-[#dadada]">
              <ScrollButton label="向上滚动" turn="rotate-180" />
              <div className="mt-[177px] h-[211px] border border-[#ababab] bg-white" />
              <ScrollButton label="向下滚动" turn="" className="mt-auto" />
            </div>
          </div>
          <SheetTabs />
        </div>
        <FormatPane />
      </main>
      <StatusBar />
      <InputMethodBar />
      <SiteMark />
    </div>
  );
}
